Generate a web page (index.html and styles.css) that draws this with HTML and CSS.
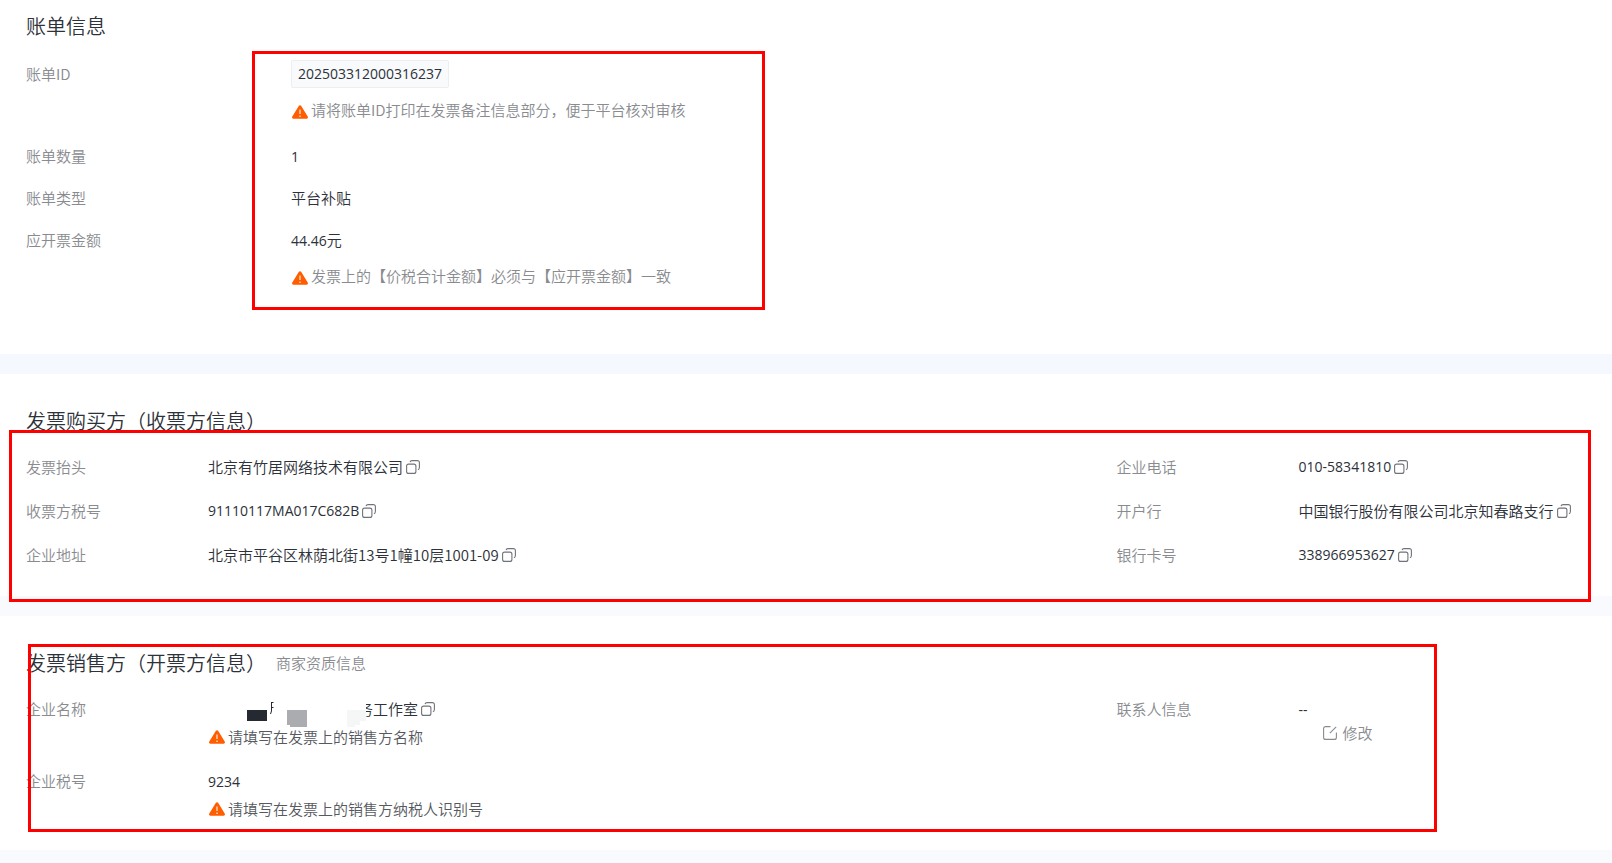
FILE: index.html
```html
<!DOCTYPE html>
<html lang="zh-CN">
<head>
  <meta charset="UTF-8">
  <meta name="viewport" content="width=device-width, initial-scale=1.0">
  <title>账单信息</title>
  <link rel="stylesheet" href="styles.css">
</head>
<body>

  <!-- shared icons -->
  <svg class="sprite" aria-hidden="true">
    <symbol id="icon-warn" viewBox="0 0 16 14">
      <path d="M6.9.8a1.3 1.3 0 0 1 2.2 0l6.6 10.8a1.4 1.4 0 0 1-1.2 2.2h-13a1.4 1.4 0 0 1-1.2-2.2z" fill="#ff5e00"/>
      <path d="M8 4.5v4.6M8 10.4v1.6" stroke="#fff" stroke-width="1.3" stroke-opacity=".8"/>
    </symbol>
    <symbol id="icon-copy" viewBox="0 0 14 14">
      <rect x=".6" y="4.1" width="9.3" height="9.3" rx="2" fill="none" stroke="currentColor" stroke-width="1.1"/>
      <path d="M4 2.1C4.300 1.100 5 .6 6 .6h5.400a2 2 0 0 1 2 2v4.800c0 1.200-.5 2-1.500 2.300" fill="none" stroke="currentColor" stroke-width="1.1"/>
    </symbol>
    <symbol id="icon-edit" viewBox="0 0 14 14">
      <path d="M7.500.6H2.600a2 2 0 0 0-2 2v8.800a2 2 0 0 0 2 2h8.800a2 2 0 0 0 2-2V6.500M13.200.8L6.800 7.200" fill="none" stroke="currentColor" stroke-width="1.1"/>
    </symbol>
  </svg>

  <section class="panel bill">
    <h2>账单信息</h2>
    <dl class="fields">
      <div class="row">
        <dt>账单ID</dt>
        <dd>
          <span class="num tag">202503312000316237</span>
          <p class="tip"><svg class="warn"><use href="#icon-warn"/></svg>请将账单ID打印在发票备注信息部分，便于平台核对审核</p>
        </dd>
      </div>
      <div class="row">
        <dt>账单数量</dt>
        <dd><span class="num">1</span></dd>
      </div>
      <div class="row">
        <dt>账单类型</dt>
        <dd>平台补贴</dd>
      </div>
      <div class="row">
        <dt>应开票金额</dt>
        <dd>
          <span class="num">44.46</span>元
          <p class="tip"><svg class="warn"><use href="#icon-warn"/></svg>发票上的【价税合计金额】必须与【应开票金额】一致</p>
        </dd>
      </div>
    </dl>
    <div class="mark mark-bill"></div>
  </section>

  <section class="panel buyer">
    <h2>发票购买方（收票方信息）</h2>
    <div class="columns">
      <dl class="fields">
        <div class="row">
          <dt>发票抬头</dt>
          <dd class="line">北京有竹居网络技术有限公司<button class="copy" type="button" aria-label="复制"><svg><use href="#icon-copy"/></svg></button></dd>
        </div>
        <div class="row">
          <dt>收票方税号</dt>
          <dd class="line"><span class="num">91110117MA017C682B</span><button class="copy" type="button" aria-label="复制"><svg><use href="#icon-copy"/></svg></button></dd>
        </div>
        <div class="row">
          <dt>企业地址</dt>
          <dd class="line">北京市平谷区林荫北街13号1幢10层1001-09<button class="copy" type="button" aria-label="复制"><svg><use href="#icon-copy"/></svg></button></dd>
        </div>
      </dl>
      <dl class="fields">
        <div class="row">
          <dt>企业电话</dt>
          <dd class="line"><span class="num">010-58341810</span><button class="copy" type="button" aria-label="复制"><svg><use href="#icon-copy"/></svg></button></dd>
        </div>
        <div class="row">
          <dt>开户行</dt>
          <dd class="line">中国银行股份有限公司北京知春路支行<button class="copy" type="button" aria-label="复制"><svg><use href="#icon-copy"/></svg></button></dd>
        </div>
        <div class="row">
          <dt>银行卡号</dt>
          <dd class="line"><span class="num">338966953627</span><button class="copy" type="button" aria-label="复制"><svg><use href="#icon-copy"/></svg></button></dd>
        </div>
      </dl>
    </div>
    <div class="mark mark-buyer"></div>
  </section>

  <section class="panel seller">
    <div class="heading">
      <h2>发票销售方（开票方信息）</h2>
      <a href="#">商家资质信息</a>
    </div>
    <div class="columns">
      <dl class="fields">
        <div class="row">
          <dt>企业名称</dt>
          <dd>
            <div class="line">
              <!-- covers the hidden part of the company name -->
              <svg class="redacted" viewBox="0 0 158 28" aria-hidden="true">
                <path d="M39 15h20v11H39z" fill="#252931"/>
                <path d="M63.500 7v9l-1 3M64 7.500h1.500M64 12.500h1.500" fill="none" stroke="#252931"/>
                <path d="M79 15h20v17H82v-2h-3z" fill="#abacb0"/>
                <path d="M139 15h19v11h-6v4h-5v2h-8z" fill="#f5f7f7"/>
              </svg>
              <span class="name">务工作室</span>
              <button class="copy" type="button" aria-label="复制"><svg><use href="#icon-copy"/></svg></button>
            </div>
            <p class="tip"><svg class="warn"><use href="#icon-warn"/></svg>请填写在发票上的销售方名称</p>
          </dd>
        </div>
        <div class="row">
          <dt>企业税号</dt>
          <dd>
            <span class="num">9234</span>
            <p class="tip"><svg class="warn"><use href="#icon-warn"/></svg>请填写在发票上的销售方纳税人识别号</p>
          </dd>
        </div>
      </dl>
      <dl class="fields">
        <div class="row">
          <dt>联系人信息</dt>
          <dd>
            <span class="num">--</span>
            <button class="edit" type="button"><svg><use href="#icon-edit"/></svg>修改</button>
          </dd>
        </div>
      </dl>
    </div>
    <div class="mark mark-seller"></div>
  </section>

</body>
</html>
```

FILE: styles.css
```css
* {
  box-sizing: border-box;
}
body {
  margin: 0;
  font-family: "Noto Sans CJK SC", sans-serif;
  font-size: 15px;
  font-weight: 350;
  line-height: 28px;
  color: #2d3139;
  background-color: #f9fafd;
}
h2, dl, dd, p {
  margin: 0;
}
h2 {
  font-size: 20px;
  font-weight: 350;
}
.sprite {
  display: none;
}

/* panels */
.panel {
  position: relative;
  padding: 33px 28px 27px 26px;
  margin-bottom: 20px;
  background-color: #fff;
}
.panel h2 {
  margin-bottom: 18px;
}
.bill {
  padding-top: 12px;
  padding-bottom: 60px;
  margin-bottom: 0;
}
.bill h2 {
  margin-bottom: 20px;
}
.buyer {
  border-top: 20px solid #f5f8fe;
}
.seller {
  margin-bottom: 0;
}
.heading {
  display: flex;
  gap: 10px;
}
.heading a {
  color: #898b8f;
  text-decoration: none;
}

/* label and value rows */
.columns {
  display: grid;
  grid-template-columns: 7fr 3fr;
}
.fields {
  display: flex;
  flex-direction: column;
  gap: 16px;
}
.row {
  display: grid;
  grid-template-columns: 182px 1fr;
}
.row dt {
  color: #898b8f;
}
.row dd {
  white-space: nowrap;
}
.bill .fields {
  gap: 14px;
}
.bill .row {
  grid-template-columns: 265px 1fr;
}
.line {
  display: flex;
  align-items: center;
}
.num {
  font-family: "Open Sans", sans-serif;
  font-size: 14px;
  font-weight: 400;
  line-height: 20px;
}
.tag {
  display: block;
  width: max-content;
  padding: 0 6px;
  line-height: 26px;
  border: 1px solid #eceef0;
  border-radius: 2px;
  background-color: #f8fafc;
}
.tip {
  display: flex;
  align-items: center;
  gap: 3px;
  padding-left: 1px;
  color: #565960;
}
.bill .tip {
  margin: 8px 0 4px;
  color: #898b8f;
}
.warn {
  width: 16px;
  height: 14px;
}
.bill .warn {
  margin-top: 4px;
}

/* buttons */
.copy, .edit {
  padding: 0;
  border: 0;
  background: none;
  font: inherit;
  color: #70737a;
  cursor: pointer;
}
.copy {
  display: flex;
  margin-left: 3px;
}
.copy svg, .edit svg {
  width: 14px;
  height: 14px;
}
.edit {
  display: flex;
  align-items: center;
  gap: 6px;
  margin-left: 24px;
  line-height: 20px;
  color: #898b8f;
}

.redacted {
  position: relative;
  width: 158px;
  height: 28px;
  overflow: visible;
  background-color: #fff;
}
.name {
  margin-left: -8px;
}

/* red highlight boxes lying over the panels */
.mark {
  position: absolute;
  border: 3px solid #f00;
  pointer-events: none;
}
.mark-bill {
  top: 51px;
  left: 252px;
  width: 513px;
  height: 259px;
}
.mark-buyer {
  top: 56px;
  right: 21px;
  bottom: -6px;
  left: 9px;
  z-index: 1;
}
.mark-seller {
  top: 28px;
  right: 175px;
  bottom: 18px;
  left: 28px;
}
```
